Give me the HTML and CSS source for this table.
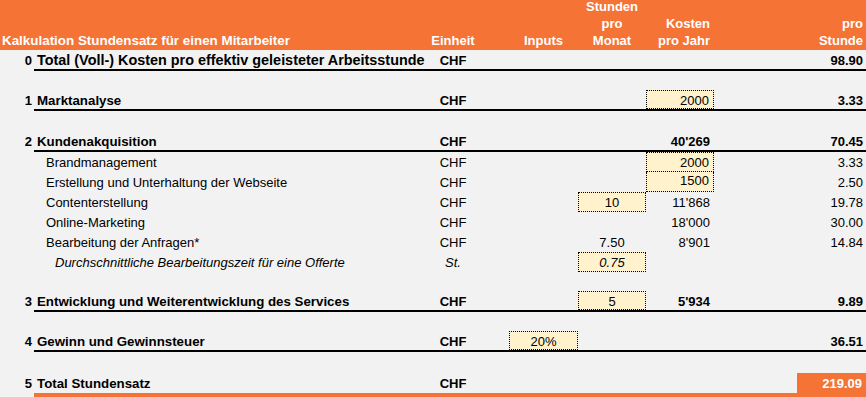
FILE: index.html
```html
<!DOCTYPE html>
<html lang="de">
<head>
<meta charset="utf-8">
<title>Kalkulation Stundensatz</title>
<link rel="stylesheet" href="styles.css">
</head>
<body>
<div class="sheet">
  <div class="head">
    <div class="title">Kalkulation Stundensatz für einen Mitarbeiter</div>
    <div class="u">Einheit</div>
    <div class="i">Inputs</div>
    <div class="m">Stunden<br>pro<br>Monat</div>
    <div class="k">Kosten<br>pro Jahr</div>
    <div class="s">pro<br>Stunde</div>
  </div>

  <div class="row sec b">
    <div class="n">0</div>
    <div class="l big">Total (Voll-) Kosten pro effektiv geleisteter Arbeitsstunde</div>
    <div class="u">CHF</div>
    <div class="s">98.90</div>
  </div>
  <div class="row gap19"></div>

  <div class="row sec b">
    <div class="n">1</div>
    <div class="l">Marktanalyse</div>
    <div class="u">CHF</div>
    <div class="k box reg">2000</div>
    <div class="s">3.33</div>
  </div>
  <div class="row"></div>

  <div class="row sec b">
    <div class="n">2</div>
    <div class="l">Kundenakquisition</div>
    <div class="u">CHF</div>
    <div class="k">40'269</div>
    <div class="s">70.45</div>
  </div>
  <div class="row">
    <div class="l sub">Brandmanagement</div>
    <div class="u">CHF</div>
    <div class="k box">2000</div>
    <div class="s">3.33</div>
  </div>
  <div class="row">
    <div class="l sub">Erstellung und Unterhaltung der Webseite</div>
    <div class="u">CHF</div>
    <div class="k box joined">1500</div>
    <div class="s">2.50</div>
  </div>
  <div class="row">
    <div class="l sub">Contenterstellung</div>
    <div class="u">CHF</div>
    <div class="m box">10</div>
    <div class="k">11'868</div>
    <div class="s">19.78</div>
  </div>
  <div class="row">
    <div class="l sub">Online-Marketing</div>
    <div class="u">CHF</div>
    <div class="k">18'000</div>
    <div class="s">30.00</div>
  </div>
  <div class="row">
    <div class="l sub">Bearbeitung der Anfragen*</div>
    <div class="u">CHF</div>
    <div class="m">7.50</div>
    <div class="k">8'901</div>
    <div class="s">14.84</div>
  </div>
  <div class="row it">
    <div class="l subsub">Durchschnittliche Bearbeitungszeit für eine Offerte</div>
    <div class="u">St.</div>
    <div class="m box">0.75</div>
  </div>
  <div class="row gap19"></div>

  <div class="row sec b">
    <div class="n">3</div>
    <div class="l">Entwicklung und Weiterentwicklung des Services</div>
    <div class="u">CHF</div>
    <div class="m box reg">5</div>
    <div class="k">5'934</div>
    <div class="s">9.89</div>
  </div>
  <div class="row gap19"></div>

  <div class="row sec b">
    <div class="n">4</div>
    <div class="l">Gewinn und Gewinnsteuer</div>
    <div class="u">CHF</div>
    <div class="i box reg">20%</div>
    <div class="s">36.51</div>
  </div>
  <div class="row gap21"></div>

  <div class="row total b">
    <div class="n">5</div>
    <div class="l">Total Stundensatz</div>
    <div class="u">CHF</div>
    <div class="s result">219.09</div>
  </div>
</div>
</body>
</html>
```

FILE: styles.css
```css
* {
  box-sizing: border-box;
}

body {
  margin: 0;
  background: #f2f2f2;
  font-family: "Liberation Sans", Arial, sans-serif;
  font-size: 13px;
  color: #000;
}

.sheet {
  width: 866px;
}

.head,
.row {
  display: grid;
  grid-template-columns: 34px 384px 70px 21px 69px 68px 68px 83px 69px;
  grid-template-rows: 100%;
}

.head {
  height: 50px;
  padding-bottom: 1px;
  background: #f47335;
  color: #fff;
  font-weight: bold;
  line-height: 17px;
  text-align: center;
  align-items: end;
}

.head .title {
  grid-column: 1 / 3;
  text-align: left;
  padding-left: 2px;
  white-space: nowrap;
  font-size: 13.4px;
}

.head .i { grid-column: 5; }
.head .m { grid-column: 6; }
.head .k { grid-column: 7; }
.head .s { grid-column: 9; }

.row {
  height: 20px;
  line-height: 21px;
  white-space: nowrap;
}

.row.gap19 { height: 19px; }
.row.gap21 { height: 21px; }

.row.sec {
  height: 21px;
  padding-bottom: 2px;
  background: linear-gradient(#000, #000) no-repeat 34px 100% / calc(100% - 34px) 2px;
}

.row.total {
  height: 24px;
  padding-bottom: 4px;
  background: linear-gradient(#f47335, #f47335) no-repeat 34px 100% / calc(100% - 34px) 4px;
}

.b { font-weight: bold; }
.it { font-style: italic; }

.n {
  grid-column: 1;
  text-align: right;
  padding-right: 2px;
}

.l {
  grid-column: 2;
  padding-left: 3px;
}

.b .l { font-size: 13.3px; }
.b .l.big { font-size: 14.4px; }
.l.sub { padding-left: 12px; }
.l.subsub { padding-left: 21px; }

.u {
  grid-column: 3;
  text-align: center;
}

.i {
  grid-column: 5;
  text-align: center;
}

.m {
  grid-column: 6;
  text-align: center;
}

.k {
  grid-column: 7;
  text-align: right;
  padding-right: 4px;
}

.s {
  grid-column: 9;
  text-align: right;
  padding-right: 3px;
}

.box {
  background: #fff2cc;
  border: 1px dotted #000;
  line-height: 19px;
}

.box.joined {
  border-top: none;
  line-height: 18px;
}

.b .reg { font-weight: normal; }

.result {
  background: #f47335;
  color: #fff;
  padding-right: 4px;
}
```
